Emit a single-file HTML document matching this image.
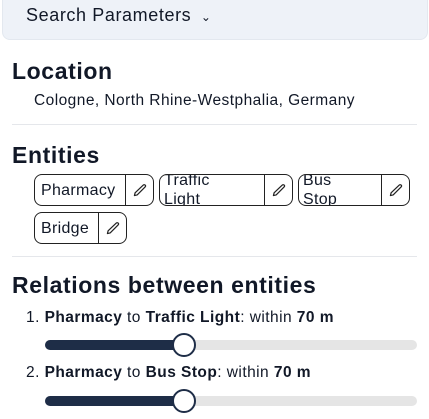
<!DOCTYPE html>
<html><head><style>
*{box-sizing:border-box;margin:0;padding:0}
body{width:429px;height:419px;overflow:hidden;background:#fff;font-family:"Liberation Sans",sans-serif;color:#111827;position:relative}
.hdr{position:absolute;left:2px;top:-10px;width:426px;height:50px;background:#eef2f8;border-radius:0 0 8px 8px;border:1px solid #e3e8ef}
.hdr span{position:absolute;left:23px;top:14px;font-size:18px;color:#111827;letter-spacing:0.6px}
.h{position:absolute;left:12px;font-size:23px;font-weight:bold;letter-spacing:0.6px}
.t{position:absolute;font-size:15.5px;letter-spacing:0.45px}
.hr{position:absolute;left:12px;width:405px;height:1px;background:#e5e7eb}
.chip{position:absolute;height:32px;border:1.5px solid #222;border-radius:8px;display:flex;overflow:hidden}
.chip .l{flex:1;font-size:16px;padding-left:6px;display:flex;align-items:center;line-height:19px;overflow:hidden;letter-spacing:0.3px}
.chip .p{width:28px;border-left:1.5px solid #222;display:flex;align-items:center;justify-content:center}
.track{position:absolute;left:45px;width:372px;height:10px;border-radius:5px;background:#e5e5e5}
.fill{position:absolute;left:0;top:0;height:10px;width:139px;border-radius:5px;background:#1e2d47}
.thumb{position:absolute;left:127px;top:-7px;width:24px;height:24px;border-radius:50%;background:#fff;border:2.5px solid #1e2d47}
</style></head><body>
<div class="hdr"><span>Search Parameters <span style="position:static;font-size:12px;margin-left:4px">&#8964;</span></span></div>
<div class="h" style="top:58px">Location</div>
<div class="t" style="left:34px;top:92px">Cologne, North Rhine-Westphalia, Germany</div>
<div class="hr" style="top:124px"></div>
<div class="h" style="top:142px">Entities</div>
<svg width="0" height="0" style="position:absolute"><defs><symbol id="pen" viewBox="0 0 16 16"><path d="M12 2.2a1.4 1.4 0 0 1 2 2L5.5 12.7 2.6 13.4l.7-2.9z" fill="none" stroke="#222" stroke-width="1.3" stroke-linejoin="round"/></symbol></defs></svg>
<div class="chip" style="left:34px;top:174px;width:120px"><div class="l">Pharmacy</div><div class="p"><svg width="15" height="15"><use href="#pen"/></svg></div></div>
<div class="chip" style="left:159px;top:174px;width:134px"><div class="l" style="padding-left:4px">Traffic<br>Light</div><div class="p"><svg width="15" height="15"><use href="#pen"/></svg></div></div>
<div class="chip" style="left:298px;top:174px;width:112px"><div class="l" style="padding-left:4px">Bus<br>Stop</div><div class="p"><svg width="15" height="15"><use href="#pen"/></svg></div></div>
<div class="chip" style="left:34px;top:212px;width:93px"><div class="l">Bridge</div><div class="p"><svg width="15" height="15"><use href="#pen"/></svg></div></div>
<div class="hr" style="top:256px"></div>
<div class="h" style="top:272px">Relations between entities</div>
<div class="t" style="left:26px;top:309px">1. <b>Pharmacy</b> to <b>Traffic Light</b>: within <b>70 m</b></div>
<div class="track" style="top:340px"><div class="fill"></div><div class="thumb"></div></div>
<div class="t" style="left:26px;top:364px">2. <b>Pharmacy</b> to <b>Bus Stop</b>: within <b>70 m</b></div>
<div class="track" style="top:396px"><div class="fill"></div><div class="thumb"></div></div>
</body></html>
